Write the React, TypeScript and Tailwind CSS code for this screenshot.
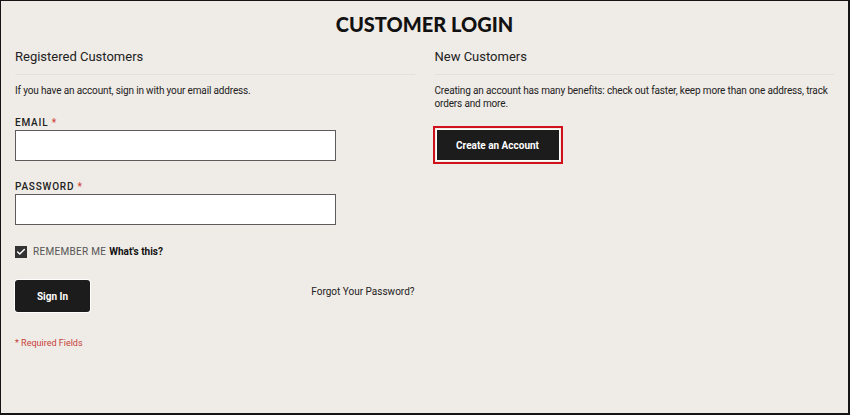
import { Check } from 'lucide-react';

const body = { fontFamily: 'Roboto, "Liberation Sans", sans-serif' };

function Field({ label }: { label: string }) {
  return (
    <div className="flex flex-col">
      <label className="text-[10px] leading-[14px] font-medium tracking-[0.08em] text-[#222]">
        {label} <span className="text-[#d0483d]">*</span>
      </label>
      <input className="h-[31px] w-[321px] border border-[#5c5c5c] bg-white outline-none" />
    </div>
  );
}

export default function App() {
  return (
    <div
      className="flex h-[415px] w-[850px] flex-col border-t border-l border-r-2 border-b-2 border-[#151515] bg-[#efebe6] text-[#222]"
      style={body}
    >
      <h1
        className="mt-[10px] text-center text-[20px] font-black leading-[26px] text-[#111]"
        style={{ fontFamily: 'Lato, "Liberation Sans", sans-serif' }}
      >
        CUSTOMER LOGIN
      </h1>

      <div className="mt-[9px] flex gap-[20px] px-[14px]">
        {/* Registered */}
        <div className="flex w-[401px] flex-col">
          <h2 className="text-[13px] leading-[22px] font-normal text-[#222]">Registered Customers</h2>
          <div className="mt-[6px] h-px bg-[#e4e0da]" />
          <p className="mt-[9px] text-[10px] leading-[14px] tracking-[-0.015em]">
            If you have an account, sign in with your email address.
          </p>

          <div className="mt-[18px] flex flex-col gap-[19px]">
            <Field label="EMAIL" />
            <Field label="PASSWORD" />
          </div>

          <div className="mt-[19px] flex items-center gap-[6px]">
            <span className="flex h-[12px] w-[12px] items-center justify-center bg-[#333]">
              <Check size={10} strokeWidth={3.5} className="text-white" />
            </span>
            <span className="text-[10px] tracking-[0.03em] text-[#555]">REMEMBER ME</span>
            <span className="-ml-[3px] text-[10px] font-bold text-[#111]">What's this?</span>
          </div>

          <div className="mt-[21px] flex items-start justify-between">
            <button
              type="button"
              className="h-[32px] w-[75px] rounded-[3px] bg-[#1c1c1c] text-[10px] font-bold text-white ring-1 ring-white"
            >
              Sign In
            </button>
            <a className="mt-[4px] text-[10px] text-[#222]">Forgot Your Password?</a>
          </div>

          <p className="mt-[25px] text-[9px] text-[#c8413a]">* Required Fields</p>
        </div>

        {/* New */}
        <div className="flex w-[401px] flex-col">
          <h2 className="text-[13px] leading-[22px] font-normal text-[#222]">New Customers</h2>
          <div className="mt-[6px] h-px bg-[#e4e0da]" />
          <p className="mt-[9px] text-[10px] leading-[13px] tracking-[-0.015em]">
            Creating an account has many benefits: check out faster, keep more than one address, track orders and
            more.
          </p>
          <div className="-ml-[2px] mt-[16px] self-start border-2 border-[#d0101b] p-[2px]">
            <button
              type="button"
              className="h-[30px] w-[122px] bg-[#1c1c1c] text-[10px] font-bold text-white ring-1 ring-white"
            >
              Create an Account
            </button>
          </div>
        </div>
      </div>
    </div>
  );
}
